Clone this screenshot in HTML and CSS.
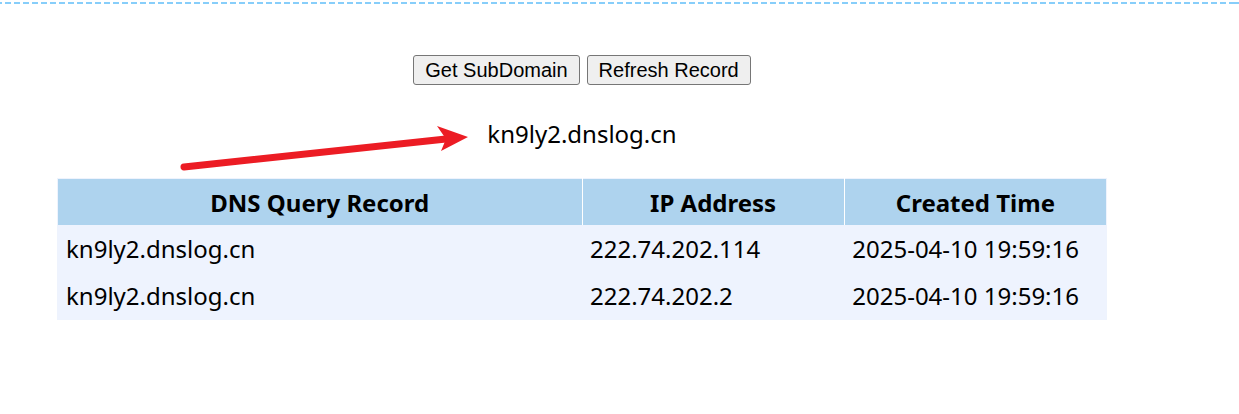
FILE: index.html
```html
<!DOCTYPE html>
<html lang="en">
<head>
  <meta charset="UTF-8">
  <title>DNSLog Platform</title>
  <link rel="stylesheet" href="styles.css">
</head>
<body>

  <div class="topline"></div>

  <div class="wrap">
    <div class="actions">
      <button type="button" class="btn">Get SubDomain</button>
      <button type="button" class="btn">Refresh Record</button>
    </div>

    <div id="domain" class="domain">kn9ly2.dnslog.cn</div>

    <table class="records">
      <thead>
        <tr>
          <th class="col-domain">DNS Query Record</th>
          <th class="col-ip">IP Address</th>
          <th class="col-time">Created Time</th>
        </tr>
      </thead>
      <tbody>
        <tr>
          <td>kn9ly2.dnslog.cn</td>
          <td>222.74.202.114</td>
          <td>2025-04-10 19:59:16</td>
        </tr>
        <tr>
          <td>kn9ly2.dnslog.cn</td>
          <td>222.74.202.2</td>
          <td>2025-04-10 19:59:16</td>
        </tr>
      </tbody>
    </table>
  </div>

  <!-- annotation arrow -->
  <svg class="arrow" width="1239" height="414" viewBox="0 0 1239 414">
    <line x1="184" y1="167" x2="446" y2="139" stroke="#ec1c24" stroke-width="7" stroke-linecap="round"/>
    <polygon points="437,126 468,137 441,151 446,139" fill="#ec1c24"/>
  </svg>

</body>
</html>
```

FILE: styles.css
```css
body {
  margin: 0;
  font-family: "Noto Sans", "Open Sans", sans-serif;
  color: #000;
  background: #fff;
  position: relative;
}

.topline {
  height: 2px;
  margin-top: 2px;
  background: repeating-linear-gradient(to right, #87cefa 0 6px, transparent 6px 9px);
  background-position: -4px 0;
}

.wrap {
  width: 1164px;
  text-align: center;
}

.actions {
  display: flex;
  justify-content: center;
  gap: 7px;
  margin-top: 51px;
}

.btn {
  font-family: "Liberation Sans", Arial, sans-serif;
  font-size: 20px;
  line-height: 22px;
  padding: 3px 11px;
  color: #000;
  background: #efefef;
  border: 1px solid #767676;
  border-radius: 3px;
}

.domain {
  font-size: 24px;
  line-height: 30px;
  margin-top: 34px;
}

.records {
  width: 1050px;
  margin: 29px auto 0;
  border-collapse: collapse;
  border: 1px solid #eef3fd;
  font-size: 24px;
  text-align: left;
}

.records th {
  height: 46px;
  padding: 0 8px;
  background: #aed3ee;
  text-align: center;
  font-weight: bold;
  border-right: 1px solid #fff;
}

.records th:last-child {
  border-right: none;
}

.records td {
  height: 47px;
  padding: 0 8px;
  background: #eef3fe;
}

.col-domain { width: 50%; }
.col-ip { width: 25%; }
.col-time { width: 25%; }

.arrow {
  position: absolute;
  top: 0;
  left: 0;
  pointer-events: none;
}
```
